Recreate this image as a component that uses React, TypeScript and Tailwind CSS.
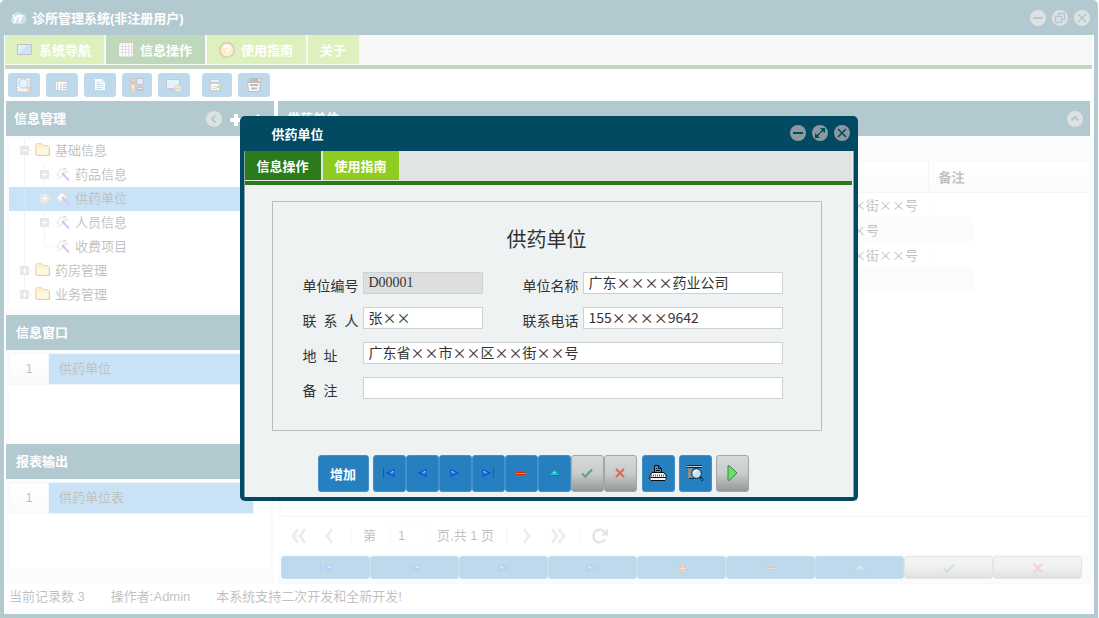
import React from 'react';
import { useState } from 'react';

type NavAction = 'first' | 'prev' | 'next' | 'last' | 'plus' | 'minus' | 'up' | 'check' | 'cross';

type TreeNode = {
    label: string,
    level: number,
    state: 'open' | 'closed' | 'leaf',
    selected?: boolean
};

const treeNodes: TreeNode[] = [
    { label: '基础信息', level: 0, state: 'open' },
    { label: '药品信息', level: 1, state: 'closed' },
    { label: '供药单位', level: 1, state: 'closed', selected: true },
    { label: '人员信息', level: 1, state: 'closed' },
    { label: '收费项目', level: 1, state: 'leaf' },
    { label: '药房管理', level: 0, state: 'closed' },
    { label: '业务管理', level: 0, state: 'closed' },
];

const addresses = ['广东省××市××区××街××号', '广东省××市××区××号', '广东省××市××区××街××号', ''];

const pagerActions: NavAction[] = ['first', 'prev', 'next', 'last', 'plus', 'minus', 'up', 'check', 'cross'];
const dialogActions: NavAction[] = ['first', 'prev', 'next', 'last', 'minus', 'up', 'check', 'cross'];

const actionLabels: Record<NavAction, string> = {
    first: '首记录',
    prev: '上一条',
    next: '下一条',
    last: '末记录',
    plus: '新增',
    minus: '删除',
    up: '编辑',
    check: '保存',
    cross: '取消',
};

const NavIcon = ({ action }: { action: NavAction }) => (
    <svg viewBox="0 0 16 16" className="h-4 w-4 shrink-0" aria-hidden="true">
        {(action === 'first' || action === 'last') && (
            <g transform={action === 'last' ? 'translate(16 0) scale(-1 1)' : undefined}>
                <path d="M2.5 3.5v9" stroke="#1450d8" strokeWidth="1" />
                <path d="M13.5 4v8L5 8z" fill="#0a44c4" />
                <path d="M12.5 5.5v5L7 8z" fill="#1f7cff" />
                <path d="M12.500 5.500v2L9 7.500z" fill="#9ad2ff" />
            </g>
        )}
        {(action === 'prev' || action === 'next') && (
            <g transform={action === 'next' ? 'translate(16 0) scale(-1 1)' : undefined}>
                <path d="M12.5 4v8L4 8z" fill="#0a44c4" />
                <path d="M11.5 5.5v5L6 8z" fill="#1f7cff" />
                <path d="M11.500 5.500v2L8 7.500z" fill="#9ad2ff" />
            </g>
        )}
        {action === 'plus' && (
            <>
                <path d="M8.5 4v9M4 8.5h9" stroke="#e02c00" strokeWidth="3" />
                <path d="M8.5 5v7M5 8.5h7" stroke="#ff9a3c" strokeWidth="1" />
            </>
        )}
        {action === 'minus' && (
            <>
                <path d="M3 8.5h10" stroke="#d62a00" strokeWidth="3" />
                <path d="M3 8.5h10" stroke="#ff8a1c" strokeWidth="1" />
            </>
        )}
        {action === 'up' && (
            <>
                <path d="M3 11L8.5 5l5.5 6z" fill="#19c4cc" />
                <path d="M3 10.500h11" stroke="#07827c" />
                <path d="M6.500 8.500l2-2 1 1z" fill="#a0f8f8" />
            </>
        )}
        {action === 'check' && <path d="M3 8.5l3.2 3.2L13 4.5" fill="none" stroke="#63a37f" strokeWidth="2.2" />}
        {action === 'cross' && <path d="M4 4l8 8M12 4l-8 8" fill="none" stroke="#d9695d" strokeWidth="2.2" />}
    </svg>
);

const NavButton = ({ action, className }: { action: NavAction, className: string }) => {
    const disabled = action === 'check' || action === 'cross';
    return (
        <button
            type="button"
            disabled={disabled}
            aria-label={actionLabels[action]}
            className={
                'flex items-center justify-center rounded-[3px] border ' +
                (disabled
                    ? 'border-[#a3a7a7] bg-[linear-gradient(#d6d9d9,#c9cccc_50%,#939898)] '
                    : 'border-[#4590c8] bg-[#2680bf] ') +
                className
            }
        >
            <NavIcon action={action} />
        </button>
    );
};

type RoundIcon = 'min' | 'restore' | 'max' | 'close' | 'left' | 'up';

const RoundButton = ({ icon, label }: { icon: RoundIcon, label: string }) => (
    <button type="button" aria-label={label} className="h-4 w-4">
        <svg viewBox="0 0 16 16" className="h-4 w-4" fill="none" stroke="#024a62" strokeWidth="1.6">
            <circle cx="8" cy="8" r="8" fill="#8c9a9f" stroke="none" />
            {icon === 'min' && <path d="M3 8h10" strokeWidth="2" />}
            {icon === 'restore' && <path d="M3.5 6.5h6v6h-6zM6.5 6V3.5h6v6H10" strokeWidth="1.3" />}
            {icon === 'max' && (
                <>
                    <path d="M4.5 11.5l7-7" />
                    <path d="M8 3h5v5zM3 8v5h5z" fill="#024a62" stroke="none" />
                    <path d="M7 7l2 2" stroke="#8c9a9f" strokeWidth="1" />
                </>
            )}
            {icon === 'close' && <path d="M4 4l8 8M12 4l-8 8" />}
            {icon === 'left' && <path d="M9.5 4.5L6 8l3.5 3.5" strokeWidth="2" />}
            {icon === 'up' && <path d="M4.5 9.5L8 6l3.5 3.5" strokeWidth="2" />}
        </svg>
    </button>
);

const Branch = ({ node, last }: { node: TreeNode, last: boolean }) => (
    <svg viewBox="0 0 20 24" className="h-6 w-5 shrink-0" fill="none" aria-hidden="true">
        <path d={last ? 'M9.5 0v12' : 'M9.5 0v24'} stroke="#b0b4b4" strokeDasharray="1 1" />
        <path d="M10 11.5h8" stroke="#b0b4b4" strokeDasharray="1 1" />
        {node.state !== 'leaf' && (
            <>
                <rect x="5" y="7" width="9" height="9" fill="#acb0b0" />
                <path d={node.state === 'open' ? 'M6.5 11.5h6' : 'M6.5 11.5h6M9.5 8.5v6'} stroke="#fff" />
            </>
        )}
    </svg>
);

const FolderIcon = () => (
    <svg viewBox="0 0 16 16" className="mb-0.5 h-4 w-4 shrink-0" aria-hidden="true">
        <path d="M.5 4L2 1.5h4.5L8 3.5h5l1.5 2v7l-1 1H2L.5 12.5z" fill="#f3c64e" stroke="#b98416" />
        <path d="M2 5.5h10.5l1 7H3z" fill="#ffe696" />
        <path d="M3 13.5h11.5V6" stroke="#6d5a2c" fill="none" />
    </svg>
);

const WandIcon = () => (
    <svg viewBox="0 0 16 16" className="h-4 w-4 shrink-0" aria-hidden="true">
        <path d="M5 2l2 1 2-1 .5 2.5 2 .5-2 2 .5 2-2.5-.5L5.5 11 4 8.5 1 7.5 3.500 5.5z" fill="#f4f4f4" stroke="#999" strokeWidth=".8" />
        <path d="M8 1.5h4M11 3.5l3 3M2 10l3 3" stroke="#888" />
        <path d="M7.5 6.5l6.5 7" stroke="#8a38e0" strokeWidth="2" />
        <path d="M7 6l2 2" stroke="#555" strokeWidth="2" />
    </svg>
);

const ToolIcon = ({ name }: { name: string }) => (
    <svg viewBox="0 0 16 16" className="h-4 w-4 shrink-0" fill="none" aria-hidden="true">
        {name === 'preview' && (
            <>
                <path d="M1 1h13v14H1z" fill="#d4d4d4" stroke="#333" strokeDasharray="2 1" />
                <circle cx="7.5" cy="6.5" r="4.5" fill="#98dcff" stroke="#2c5878" />
                <path d="M10.5 9.5l4 4.5" stroke="#e04a10" strokeWidth="2.5" />
            </>
        )}
        {name === 'form' && (
            <>
                <path d="M1.5 3.5h12v10h-12z" fill="#dfe6ee" stroke="#59636e" />
                <path d="M2 4.5h11M3.5 5v8" stroke="#6a7683" />
                <path d="M6 7.5h2M9 7.5h4M6 9.5h2M9 9.5h4M6 11.5h2M9 11.5h4" stroke="#46566a" />
            </>
        )}
        {name === 'doc' && (
            <>
                <path d="M2.5 1.5h8l3 3v9h-11z" fill="#eef8ff" stroke="#3278b4" />
                <path d="M10.5 1.5v3h3M4.5 5.5h4M4.5 7.5h7M4.5 9.5h7M4.5 11.5h6" stroke="#3c86c2" />
            </>
        )}
        {name === 'user' && (
            <>
                <path d="M7.5 1.5h7v6h-7zM8.5 10.5h6v3h-6z" fill="#b8b0f8" stroke="#333844" />
                <path d="M10 8v2M9 12.5h5" stroke="#333844" />
                <circle cx="4" cy="3.5" r="2.3" fill="#a87848" stroke="#50340e" />
                <path d="M1.5 7h5v4h-1v4h-3v-4h-1z" fill="#f0a828" stroke="#74480c" strokeWidth=".8" />
            </>
        )}
        {name === 'monitor' && (
            <>
                <path d="M.5 2.5h13v9H.5z" fill="#a9d5f5" stroke="#3c4854" />
                <path d="M3 13.5h6" stroke="#3c4854" />
                <circle cx="12" cy="11.5" r="3.3" fill="#f0d06a" stroke="#a23fae" />
                <path d="M10 11.5h4M12 9.5v4" stroke="#38a048" />
            </>
        )}
        {name === 'insert' && (
            <>
                <path d="M1.5 2.5h9v3h-9z" fill="#a4cdf0" stroke="#42566a" />
                <path d="M1.5 6.5h9v7h-9z" fill="#eee" stroke="#5c5c5c" />
                <path d="M3 9.5h5M3 11.5h5" stroke="#8a8a8a" />
                <path d="M8 10h6M11 7v6" stroke="#149a1c" strokeWidth="2" />
            </>
        )}
        {name === 'print' && (
            <>
                <path d="M3 1.5h12l-1 3H2zM1.5 5.5h13l-1 9h-11z" fill="#e8e8e8" stroke="#222" />
                <path d="M3.5 3h9M4 8h8M5 11.5h6" stroke="#222" strokeWidth="2" />
            </>
        )}
        {name === 'screen' && (
            <>
                <path d="M.5 2.5h14v10H.5z" fill="#4aa4dc" stroke="#3c3640" />
                <path d="M1 12L11 3H1z" fill="#8accf0" />
            </>
        )}
        {name === 'grid' && (
            <>
                <path d="M3 1h12v14H1V3z" fill="#f2f2f2" />
                <path d="M1 4.5h14M1 7.5h14M1 10.5h14M4.5 1v14M7.5 1v14M10.5 1v14M13.5 1v14M1 14.5h14" stroke="#9a8fa8" />
            </>
        )}
        {name === 'help' && (
            <>
                <circle cx="8" cy="8" r="7.3" fill="#f8c838" stroke="#6e2e14" strokeWidth="1.3" />
                <path d="M5.5 6.2C5.6 3.2 10.5 3.2 10.5 6c0 2-2.5 2-2.5 4M8 11.2v1.6" stroke="#fff" strokeWidth="2" />
            </>
        )}
    </svg>
);

const toolButtons = [
    { name: 'preview', label: '预览', className: 'w-8' },
    { name: 'form', label: '表单', className: 'w-8' },
    { name: 'doc', label: '文档', className: 'w-8' },
    { name: 'user', label: '人员', className: 'w-[30px]' },
    { name: 'monitor', label: '窗口', className: 'w-8' },
    { name: 'insert', label: '插入', className: 'ml-1.5 w-[30px]' },
    { name: 'print', label: '打印', className: 'w-8' },
];

const mainTabs = [
    { label: '系统导航', icon: 'screen', active: false },
    { label: '信息操作', icon: 'grid', active: true },
    { label: '使用指南', icon: 'help', active: false },
    { label: '关于', icon: '', active: false },
];

const ListSection = ({ title, item, bodyClass }: { title: string, item: string, bodyClass: string }) => (
    <section>
        <h2 className="flex h-[35px] items-center bg-[#024a62] px-[10px] font-bold text-white">{title}</h2>
        <div className={'bg-[#eef2f3] px-[3px] pt-[3px] ' + bodyClass}>
            <div className="h-full bg-white">
                <table className="w-[245px] table-fixed border-collapse">
                    <tbody>
                        <tr className="h-[31px]">
                            <td className="w-[39px] border border-[#d3eaf8] bg-linear-to-b from-white to-[#eeeeee] text-center">1</td>
                            <td className="border border-[#b8dcf5] bg-[#4b9ede] pl-[10px]">{item}</td>
                        </tr>
                    </tbody>
                </table>
            </div>
        </div>
    </section>
);

const PagerArrow = ({ d, label, className }: { d: string, label: string, className: string }) => (
    <button type="button" aria-label={label} className={'h-4 w-4 ' + className}>
        <svg viewBox="0 0 16 16" className="h-4 w-4" fill="none" stroke="#c2c2c2" strokeWidth="3">
            <path d={d} />
        </svg>
    </button>
);

const rowColor = (index: number) => {
    switch (index) {
        case 1:
            return 'bg-[#f5f5f5]';
        case 3:
            return 'bg-[#eef2f3]';
        default:
            return 'bg-white';
    }
};

const MainWindow = () => (
    <div className="flex min-h-screen flex-col rounded-t-[5px] border-x-4 border-b-4 border-[#024a62] bg-[#024a62] text-[13px] text-[#2e2e2e]">

        { /* Title bar */}
        <header className="flex h-[35px] shrink-0 items-center pr-1 pl-1.5">
            <svg viewBox="0 0 16 16" className="h-4 w-4" aria-hidden="true">
                <path d="M4 14a4 4 0 0 1-1-7.5A5 5 0 0 1 12 4a5 5 0 0 1 0 10z" fill="#4c9cc4" />
                <path d="M3 5l2.5 4.5M8 5l-4 8M9.5 13V6H13M9.5 9H12" stroke="#fff" strokeWidth="1.8" fill="none" />
            </svg>
            <h1 className="flex-1 pt-0.5 pl-1.5 font-bold text-white">诊所管理系统(非注册用户)</h1>
            <div className="flex gap-1.5">
                <RoundButton icon="min" label="最小化" />
                <RoundButton icon="restore" label="还原" />
                <RoundButton icon="close" label="关闭" />
            </div>
        </header>

        <div className="flex flex-1 flex-col bg-white pr-0.5 pl-px">

            { /* Tabs */}
            <nav className="flex h-[34px] shrink-0 gap-0.5 border-b-4 border-[#2b7a1b] bg-[#e0e4e4] pb-px">
                {mainTabs.map((tab) => (
                    <button
                        key={tab.label}
                        type="button"
                        className={
                            'flex h-full items-center gap-1.5 px-3 font-bold text-white ' +
                            (tab.active ? 'bg-[#2b7a1b]' : 'bg-[#8fcc22]')
                        }
                    >
                        {tab.icon && <ToolIcon name={tab.icon} />}
                        <span className="pt-0.5 pr-px">{tab.label}</span>
                    </button>
                ))}
            </nav>

            { /* Toolbar */}
            <div className="flex h-8 shrink-0 items-center gap-1.5 pl-[3px]">
                {toolButtons.map((tool) => (
                    <button
                        key={tool.name}
                        type="button"
                        aria-label={tool.label}
                        className={'flex h-6 items-center justify-center rounded-[3px] bg-[#2680bf] ' + tool.className}
                    >
                        <ToolIcon name={tool.name} />
                    </button>
                ))}
            </div>

            <div className="flex flex-1 gap-1 px-px">

                { /* Sidebar */}
                <aside className="flex w-[268px] shrink-0 flex-col">
                    <section className="flex flex-1 flex-col">
                        <div className="flex h-[35px] items-center bg-[#024a62] pl-2 text-white">
                            <h2 className="flex-1 font-bold">信息管理</h2>
                            <div className="flex items-center gap-1.5 pr-2">
                                <RoundButton icon="left" label="收起" />
                                <button type="button" aria-label="展开全部" className="h-4 w-4">
                                    <svg viewBox="0 0 16 16" className="h-4 w-4">
                                        <path d="M8 3v12M2 9h12" stroke="#fff" strokeWidth="4" />
                                    </svg>
                                </button>
                                <button type="button" aria-label="移动" className="h-4 w-4">
                                    <svg viewBox="0 0 16 16" className="h-4 w-4">
                                        <path d="M8 3l6 6-6 6-6-6z" fill="#fff" />
                                    </svg>
                                </button>
                            </div>
                        </div>
                        <div className="flex flex-1 flex-col bg-[#eef2f3] px-[3px] pt-[3px] pb-1.5">
                            <ul className="flex-1 bg-white">
                                {treeNodes.map((node, index) => (
                                    <li
                                        key={node.label}
                                        className={'flex h-6 items-center pl-1.5 ' + (node.selected ? 'bg-[#4b9ede]' : '')}
                                    >
                                        {node.level === 1 && (
                                            <svg viewBox="0 0 20 24" className="h-6 w-5 shrink-0" aria-hidden="true">
                                                <path d="M9.5 0v24" stroke="#b0b4b4" strokeDasharray="1 1" />
                                            </svg>
                                        )}
                                        <Branch node={node} last={node.state === 'leaf' || index === treeNodes.length - 1} />
                                        {node.level === 0 ? <FolderIcon /> : <WandIcon />}
                                        <span className="pl-1">{node.label}</span>
                                    </li>
                                ))}
                            </ul>
                        </div>
                    </section>
                    <ListSection title="信息窗口" item="供药单位" bodyClass="h-[94px] pb-[3px]" />
                    <ListSection title="报表输出" item="供药单位表" bodyClass="h-[105px] pb-[15px]" />
                </aside>

                { /* Records */}
                <main className="flex min-w-0 flex-1 flex-col border-r border-b border-[#e0e8e9] bg-[#eef2f3]">
                    <div className="flex h-[35px] shrink-0 items-center bg-[#024a62] pr-[7px] pl-[9px] text-white">
                        <h2 className="flex-1 font-bold">供药单位</h2>
                        <RoundButton icon="up" label="折叠" />
                    </div>
                    <div className="mt-[26px] mr-0.5 ml-[3px] flex-1 bg-white">
                        <table className="w-full table-fixed border-collapse text-left font-['Noto_Sans_CJK_SC',sans-serif]">
                            <thead>
                                <tr className="h-[30px] border-b border-[#dddddd] bg-linear-to-b from-white to-[#efefef]">
                                    <th></th>
                                    <th className="w-[212px]"></th>
                                    <th className="w-[46px] border-l border-[#dddddd] pl-[10px] font-bold whitespace-nowrap">备注</th>
                                    <th className="w-[114px]"></th>
                                </tr>
                            </thead>
                            <tbody>
                                {addresses.map((address, index) => (
                                    <tr key={index} className="h-[25px]">
                                        <td className={rowColor(index)}></td>
                                        <td className={'pl-[7px] whitespace-nowrap ' + rowColor(index)}>{address}</td>
                                        <td className={'border-l border-[#f0f3f3] ' + rowColor(index)}></td>
                                        <td></td>
                                    </tr>
                                ))}
                            </tbody>
                        </table>
                    </div>

                    { /* Pager */}
                    <div className="mr-0.5 ml-px flex h-[38px] shrink-0 items-center border-t border-[#dde3e3] bg-white pl-[11px]">
                        <PagerArrow label="第一页" className="" d="M8 1L3 8l5 7M15 1l-5 7 5 7" />
                        <PagerArrow label="上一页" className="ml-4" d="M10 1L5 8l5 7" />
                        <span className="mr-3 ml-3 h-4 w-px bg-[#dddddd]" />
                        <label htmlFor="page">第</label>
                        <input id="page" defaultValue="1" className="mx-[7px] ml-[14px] h-6 w-10 border border-[#eeeeee] px-[7px]" />
                        <span>页,共 1 页</span>
                        <span className="ml-3 h-4 w-px bg-[#dddddd]" />
                        <PagerArrow label="下一页" className="ml-3" d="M5 1l5 7-5 7" />
                        <PagerArrow label="最后一页" className="ml-4" d="M1 1l5 7-5 7M8 1l5 7-5 7" />
                        <span className="ml-3 h-4 w-px bg-[#dddddd]" />
                        <button type="button" aria-label="刷新" className="ml-3 h-4 w-4">
                            <svg viewBox="0 0 16 16" className="h-4 w-4" fill="none">
                                <path d="M13 11.5A6.3 6.3 0 1 1 12.5 4" stroke="#a8a8a8" strokeWidth="2.5" />
                                <path d="M16 .5v7H9z" fill="#a8a8a8" />
                            </svg>
                        </button>
                    </div>
                    <div className="flex shrink-0 pt-0.5 pr-2 pb-1 pl-[3px]">
                        {pagerActions.map((action) => (
                            <NavButton key={action} action={action} className="h-[23px] flex-1" />
                        ))}
                    </div>
                </main>
            </div>

            { /* Status bar */}
            <footer className="flex h-[25px] shrink-0 items-center gap-[26px] pl-1">
                <span>当前记录数 3</span>
                <span>操作者:Admin</span>
                <span>本系统支持二次开发和全新开发!</span>
            </footer>
            <div className="h-[5px] shrink-0 bg-[#eef2f3]" />
        </div>
    </div>
);

const inputClass = 'h-[22px] border border-[#cfd2d2] px-[5px] text-sm leading-5 text-[#333333]';
const textInputClass = inputClass + " bg-white pb-0.5 font-['Noto_Sans_CJK_SC',sans-serif]";
const labelClass = 'pt-1 leading-5';

const SupplierDialog = () => {
    const [form, setForm] = useState({
        name: '广东××××药业公司',
        contact: '张××',
        phone: '155××××9642',
        address: '广东省××市××区××街××号',
        remark: ''
    });

    const handleChange = (e: React.ChangeEvent<HTMLInputElement>) => {
        setForm({ ...form, [e.target.name]: e.target.value });
    };

    return (
        <div role="dialog" aria-label="供药单位" className="w-[618px] rounded-[5px] border-x-4 border-b-4 border-[#024a62] bg-[#024a62] text-[13px]">
            <header className="flex h-[35px] items-center pr-1 pl-7">
                <h2 className="flex-1 pt-1 font-bold text-white">供药单位</h2>
                <div className="flex gap-1.5">
                    <RoundButton icon="min" label="最小化" />
                    <RoundButton icon="max" label="最大化" />
                    <RoundButton icon="close" label="关闭" />
                </div>
            </header>
            <div className="border-x border-[#8aa3ab] bg-[#eef2f3]">
                <nav className="mr-px flex h-[34px] gap-0.5 border-b-4 border-[#2b7a1b] bg-[#e0e4e4] pb-px font-bold text-white">
                    <button type="button" className="bg-[#2b7a1b] px-3 pt-1">信息操作</button>
                    <button type="button" className="bg-[#8fcc22] px-3 pt-1">使用指南</button>
                </nav>
                <form className="pt-4 pr-[31px] pb-[5px] pl-[27px]" onSubmit={(e) => e.preventDefault()}>
                    <div className="border border-[#b9bdbe] px-[30px] pt-6 pb-[30px] text-sm text-[#333333]">
                        <h3 className="text-center text-xl leading-7">供药单位</h3>
                        <div className="grid grid-cols-[60px_120px_40px_60px_200px] auto-rows-[22px] gap-y-[13px] pt-[18px] pb-px">
                            <label htmlFor="code" className={labelClass}>单位编号</label>
                            <input id="code" readOnly value="D00001" className={inputClass + ' bg-[#dedede] font-[Liberation_Serif]'} />
                            <span />
                            <label htmlFor="name" className={labelClass}>单位名称</label>
                            <input id="name" name="name" value={form.name} onChange={handleChange} className={textInputClass} />

                            <label htmlFor="contact" className={labelClass}>联&ensp;系&ensp;人</label>
                            <input id="contact" name="contact" value={form.contact} onChange={handleChange} className={textInputClass} />
                            <span />
                            <label htmlFor="phone" className={labelClass}>联系电话</label>
                            <input id="phone" name="phone" value={form.phone} onChange={handleChange} className={textInputClass} />

                            <label htmlFor="address" className={labelClass}>地&ensp;址</label>
                            <input id="address" name="address" value={form.address} onChange={handleChange} className={textInputClass + ' col-span-4'} />

                            <label htmlFor="remark" className={labelClass}>备&ensp;注</label>
                            <input id="remark" name="remark" value={form.remark} onChange={handleChange} className={textInputClass + ' col-span-4'} />
                        </div>
                    </div>
                    <div className="flex gap-1 pt-6 pl-[46px]">
                        <button type="button" className="h-[37px] w-[51px] rounded-[3px] border border-[#4590c8] bg-[#2680bf] pt-1 font-bold text-white">增加</button>
                        <div className="flex">
                            {dialogActions.map((action) => (
                                <NavButton key={action} action={action} className="h-[37px] w-[33px]" />
                            ))}
                        </div>
                        <button type="button" aria-label="打印" className="ml-px flex h-[37px] w-[33px] items-center justify-center rounded-[3px] border border-[#4590c8] bg-[#2680bf]">
                            <svg viewBox="0 0 18 18" className="h-[18px] w-[18px]" fill="none">
                                <path d="M5.5 9V1.5h4l3 3V9" fill="#3d93d0" stroke="#111" />
                                <path d="M9.5 1.5v3h3M7 4.5h1M7 6.5h4" stroke="#111" />
                                <path d="M3 8.5h12l2 3v4l-1 1H2l-1-1v-4z" fill="#f4f4fb" stroke="#111" />
                                <path d="M2 11.5h14" stroke="#2b74c8" strokeDasharray="1 1" strokeWidth="2" />
                                <path d="M1.5 13.5h15" stroke="#111" />
                            </svg>
                        </button>
                        <button type="button" aria-label="预览" className="flex h-[37px] w-[33px] items-center justify-center rounded-[3px] border border-[#4590c8] bg-[#2680bf]">
                            <svg viewBox="0 0 18 18" className="h-[18px] w-[18px]" fill="none">
                                <path d="M1 1.5h15M1 3.5h15" stroke="#222" />
                                <path d="M1 2.5h15" stroke="#ccc" />
                                <path d="M3.5 4v10.5H8" fill="#4e9dcc" stroke="#222" />
                                <path d="M2 4h4v10H2z" fill="#8a8f96" />
                                <circle cx="10.5" cy="9.5" r="4.8" fill="#bfe8ff" stroke="#123" />
                                <path d="M8 9a3 3 0 0 1 3-2.5" stroke="#fff" strokeWidth="1.5" />
                                <path d="M14 13l3 3.5" stroke="#0b2b52" strokeWidth="2.5" />
                                <path d="M15 14.5l1.5 1.5" stroke="#59c1ff" />
                            </svg>
                        </button>
                        <button type="button" aria-label="执行" className="flex h-[37px] w-[33px] items-center justify-center rounded-[3px] border border-[#a3a7a7] bg-[linear-gradient(#d6d9d9,#c9cccc_50%,#939898)]">
                            <svg viewBox="0 0 16 16" className="h-4 w-4">
                                <path d="M4 .8h1.5L13 8l-7.5 7.2H4z" fill="#62e562" stroke="#4c7a4c" />
                            </svg>
                        </button>
                    </div>
                </form>
            </div>
        </div>
    );
};

const App = () => {
    return (
        <div className="min-h-screen bg-white pr-px font-['Liberation_Sans','Noto_Sans_CJK_SC',sans-serif]">
            <MainWindow />
            { /* Mask with the dialog centred on it */}
            <div className="fixed inset-0 flex items-center justify-center bg-white/70 pr-0.5 pb-0.5">
                <SupplierDialog />
            </div>
        </div>
    );
};

export default App;
